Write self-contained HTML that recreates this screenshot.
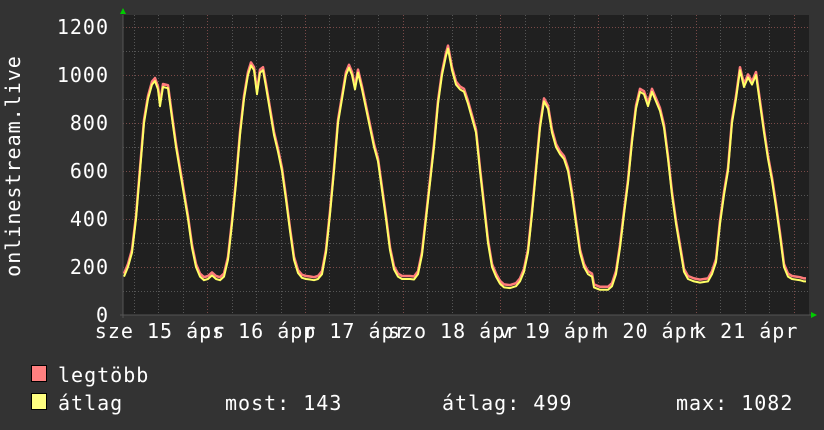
<!DOCTYPE html>
<html><head><meta charset="utf-8"><style>
html,body{margin:0;padding:0;background:#333;width:824px;height:430px;overflow:hidden}
text{font-family:"DejaVu Sans Mono","Liberation Mono",monospace;font-size:20px;fill:#fff;letter-spacing:1px}
</style></head><body>
<svg width="824" height="430" xmlns="http://www.w3.org/2000/svg">
<rect width="824" height="430" fill="#333"/>
<rect x="123" y="15" width="686" height="300" fill="#202020"/>
<g id="grid" stroke-width="1" stroke-dasharray="1,2"></g>
<line x1="123" y1="15" x2="123" y2="318" stroke="#555"/>
<line x1="120" y1="315" x2="812" y2="315" stroke="#555"/>
<polygon points="120,14 123,8 126,14" fill="#0c0"/>
<polygon points="811,312 817,315 811,318" fill="#0c0"/>
<g id="ylab" text-anchor="end"></g>
<text transform="translate(20,166) rotate(-90)" text-anchor="middle">onlinestream.live</text>
<g id="xlab" text-anchor="middle"></g>
<polyline id="pk" fill="none" stroke="#ff7b7b" stroke-width="2.5" stroke-linejoin="round"/>
<polyline id="yl" fill="none" stroke="#ffff66" stroke-width="2" stroke-linejoin="round"/>
<rect x="31.5" y="365.5" width="15" height="16" fill="#ff8080" stroke="#000"/>
<rect x="31.5" y="393.5" width="15" height="16" fill="#ffff80" stroke="#000"/>
<text x="58" y="382">legtöbb</text>
<text x="58" y="410">átlag</text>
<text x="225" y="410">most: 143</text>
<text x="442" y="410">átlag: 499</text>
<text x="676" y="410">max: 1082</text>
</svg>
<script>
var ns="http://www.w3.org/2000/svg";
var g=document.getElementById('grid');
function ln(x1,y1,x2,y2,c){var l=document.createElementNS(ns,'line');l.setAttribute('x1',x1);l.setAttribute('y1',y1);l.setAttribute('x2',x2);l.setAttribute('y2',y2);l.setAttribute('stroke',c);g.appendChild(l);}
for(var v=100;v<=1200;v+=100){var y=315-v*0.24+0.5;ln(123,y,809,y,v%200==0?'#7a4a48':'#555');}
for(var k=0;k<29;k++){var x=Math.round(134+k*24.43)+0.5;if(x>809)break;ln(x,15,x,315,(k%4==3)?'#7a4a48':'#555');}
var yl=document.getElementById('ylab');
for(var v=0;v<=1200;v+=200){var t=document.createElementNS(ns,'text');t.setAttribute('x',109);t.setAttribute('y',315-v*0.24+7);t.textContent=v;yl.appendChild(t);}
var xl=document.getElementById('xlab');
var labs=["sze 15 ápr","cs 16 ápr","p 17 ápr","szo 18 ápr","v 19 ápr","h 20 ápr","k 21 ápr"];
labs.forEach(function(s,i){var t=document.createElementNS(ns,'text');t.setAttribute('x',160+i*97.7);t.setAttribute('y',338);t.textContent=s;xl.appendChild(t);});
var d=[124,160,128,200,132,260,136,400,140,600,144,800,148,900,152,960,155,975,158,940,160,870,163,950,168,945,172,820,176,700,180,600,184,500,188,400,192,280,196,200,200,160,204,145,208,150,212,165,216,150,220,145,224,160,228,230,232,380,236,550,240,750,244,900,248,1000,251,1040,254,1020,257,920,260,1010,263,1020,266,950,270,850,274,750,278,680,282,600,286,480,290,350,294,230,298,175,302,155,306,150,310,148,314,145,318,150,322,170,326,260,330,420,334,600,338,800,342,900,346,1000,349,1030,352,1000,355,940,358,1010,362,940,366,860,370,780,374,700,378,640,382,520,386,400,390,270,394,190,398,160,402,150,410,150,414,148,418,170,422,250,426,400,430,550,434,700,438,880,442,1000,446,1080,448,1110,452,1020,456,960,460,940,464,930,468,880,472,820,476,760,480,600,484,450,488,300,492,200,496,160,500,130,504,115,510,112,516,120,520,140,524,180,528,260,532,420,536,600,540,780,544,890,548,860,552,760,556,700,560,670,564,650,568,600,572,500,576,380,580,260,584,200,588,170,592,160,594,115,600,105,608,105,612,120,616,170,620,280,624,420,628,550,632,720,636,860,640,930,644,920,648,870,652,930,656,890,660,850,664,780,668,650,672,500,676,380,680,280,684,180,688,150,694,140,700,135,708,140,712,170,716,220,720,380,724,500,728,600,732,800,736,900,740,1020,744,950,748,990,752,960,756,1000,760,880,764,760,768,650,772,560,776,450,780,330,784,200,788,160,792,150,800,145,804,140,806,140];
var p1=[],p2=[];
for(var i=0;i<d.length;i+=2){var y=315-d[i+1]*0.24;p1.push(d[i]+','+(y-3).toFixed(1));p2.push(d[i]+','+y.toFixed(1));}
document.getElementById('pk').setAttribute('points',p1.join(' '));
document.getElementById('yl').setAttribute('points',p2.join(' '));
</script>
</body></html>
